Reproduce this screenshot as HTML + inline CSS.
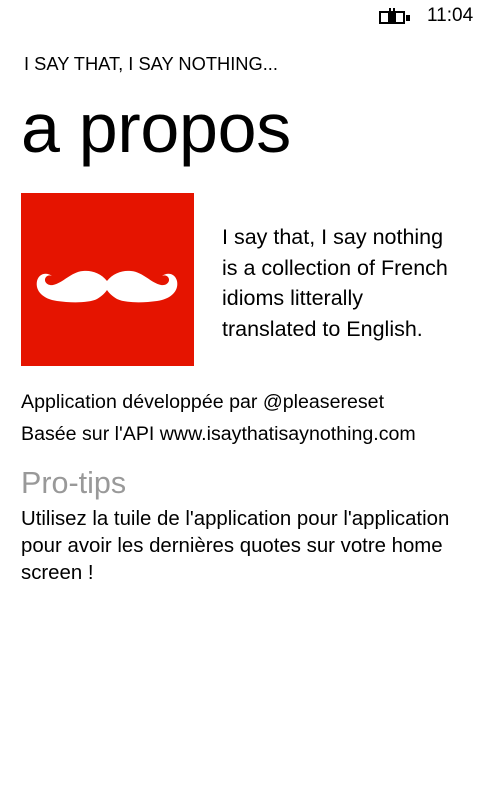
<!DOCTYPE html>
<html><head><meta charset="utf-8"><style>
body{margin:0;width:480px;height:800px;background:#fff;font-family:"Liberation Sans",sans-serif;color:#000;position:relative;overflow:hidden}
div{position:absolute;white-space:nowrap}
</style></head><body>
<svg style="position:absolute;left:378px;top:6px" width="34" height="20" viewBox="0 0 34 20">
<rect x="1" y="5" width="26" height="13" fill="#000"/><rect x="28" y="9" width="4" height="6" fill="#000"/>
<rect x="3" y="7" width="7" height="9" fill="#fff"/><rect x="18" y="7" width="7" height="9" fill="#fff"/>
<rect x="10" y="10" width="8" height="3" fill="#000"/>
<path d="M11 6h6v5a3 3 0 0 1-6 0z" fill="#000"/>
<rect x="11" y="2" width="2" height="4" fill="#000"/><rect x="15" y="2" width="2" height="4" fill="#000"/>
</svg>
<div style="left:427px;top:5px;font-size:19px">11:04</div>
<div style="left:24px;top:53px;font-size:18.3px">I SAY THAT, I SAY NOTHING...</div>
<div style="left:21px;top:88px;font-size:70px;letter-spacing:-0.3px">a propos</div>
<svg style="position:absolute;left:21px;top:193px" width="173" height="173" viewBox="0 0 173 173">
<rect width="173" height="173" fill="#e51400"/>
<g fill="#fff">
<path d="M86,88 C92,80 102,77 110,78 C122,79 130,90 140,92 C146,93 150,88 147,84 C145,82 143,82 141,83 C146,79 154,80 156,88 C158,98 150,106 136,108 C122,110 104,110 96,106 C91,103 88,100 86,97 Z"/>
<path d="M86,88 C80,80 70,77 62,78 C50,79 42,90 32,92 C26,93 22,88 25,84 C27,82 29,82 31,83 C26,79 18,80 16,88 C14,98 22,106 36,108 C50,110 68,110 76,106 C81,103 84,100 86,97 Z"/>
</g></svg>
<div style="left:222px;top:222px;font-size:21.5px;line-height:30.5px">I say that, I say nothing<br>is a collection of French<br>idioms litterally<br>translated to English.</div>
<div style="left:21px;top:386px;font-size:19.6px;line-height:32px">Application développée par @pleasereset<br>Basée sur l'API www.isaythatisaynothing.com</div>
<div style="left:21px;top:466px;font-size:30.5px;color:#999">Pro-tips</div>
<div style="left:21px;top:506px;font-size:20.4px;line-height:27px">Utilisez la tuile de l'application pour l'application<br>pour avoir les dernières quotes sur votre home<br>screen !</div>
</body></html>
